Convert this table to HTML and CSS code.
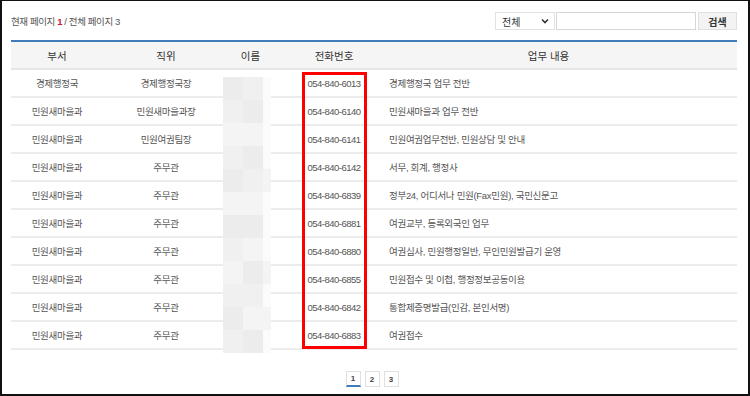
FILE: index.html
```html
<!DOCTYPE html>
<html lang="ko">
<head>
    <meta charset="UTF-8">
    <title>직원 안내</title>
    <link rel="stylesheet" href="styles.css">
</head>
<body>
    <div class="page">
        <div class="toolbar">
            <p class="page-info">현재 페이지 <strong>1</strong> / 전체 페이지 3</p>
            <form class="search">
                <div class="select-box">
                    <span>전체</span>
                    <svg width="8" height="6" viewBox="0 0 8 6"><path d="M1 1.5 L4 4.5 L7 1.5" fill="none" stroke="#333" stroke-width="1.6"/></svg>
                </div>
                <input type="text" class="search-input">
                <button type="button" class="btn">검색</button>
            </form>
        </div>

        <div class="table-wrap">
            <table class="staff">
                <colgroup>
                    <col class="c-dept">
                    <col class="c-pos">
                    <col class="c-name">
                    <col class="c-tel">
                    <col class="c-work">
                </colgroup>
                <thead>
                    <tr>
                        <th>부서</th>
                        <th>직위</th>
                        <th>이름</th>
                        <th class="tel">전화번호</th>
                        <th class="work">업무 내용</th>
                    </tr>
                </thead>
                <tbody>
                    <tr><td>경제행정국</td><td>경제행정국장</td><td></td><td class="tel">054-840-6013</td><td class="work">경제행정국 업무 전반</td></tr>
                    <tr><td>민원새마을과</td><td>민원새마을과장</td><td></td><td class="tel">054-840-6140</td><td class="work">민원새마을과 업무 전반</td></tr>
                    <tr><td>민원새마을과</td><td>민원여권팀장</td><td></td><td class="tel">054-840-6141</td><td class="work">민원여권업무전반, 민원상담 및 안내</td></tr>
                    <tr><td>민원새마을과</td><td>주무관</td><td></td><td class="tel">054-840-6142</td><td class="work">서무, 회계, 행정사</td></tr>
                    <tr><td>민원새마을과</td><td>주무관</td><td></td><td class="tel">054-840-6839</td><td class="work">정부24, 어디서나 민원(Fax민원), 국민신문고</td></tr>
                    <tr><td>민원새마을과</td><td>주무관</td><td></td><td class="tel">054-840-6881</td><td class="work">여권교부, 등록외국인 업무</td></tr>
                    <tr><td>민원새마을과</td><td>주무관</td><td></td><td class="tel">054-840-6880</td><td class="work">여권심사, 민원행정일반, 무인민원발급기 운영</td></tr>
                    <tr><td>민원새마을과</td><td>주무관</td><td></td><td class="tel">054-840-6855</td><td class="work">민원접수 및 이첩, 행정정보공동이용</td></tr>
                    <tr><td>민원새마을과</td><td>주무관</td><td></td><td class="tel">054-840-6842</td><td class="work">통합제증명발급(인감, 본인서명)</td></tr>
                    <tr><td>민원새마을과</td><td>주무관</td><td></td><td class="tel">054-840-6883</td><td class="work">여권접수</td></tr>
                </tbody>
            </table>

            <!-- 이름 가림 -->
            <div class="blur">
                <i class="b1"></i><i class="b2"></i><i class="b0"></i>
                <i class="b2"></i><i class="b1"></i><i class="b0"></i>
                <i class="b3"></i><i class="b3"></i><i class="b0"></i>
                <i class="b2"></i><i class="b1"></i><i class="b0"></i>
                <i class="b1"></i><i class="b2"></i><i class="b3"></i>
                <i class="b3"></i><i class="b3"></i><i class="b0"></i>
                <i class="b1"></i><i class="b1"></i><i class="b0"></i>
                <i class="b2"></i><i class="b3"></i><i class="b0"></i>
                <i class="b3"></i><i class="b1"></i><i class="b3"></i>
                <i class="b2"></i><i class="b2"></i><i class="b0"></i>
                <i class="b1"></i><i class="b3"></i><i class="b3"></i>
                <i class="b2"></i><i class="b1"></i><i class="b0"></i>
            </div>
            <div class="highlight"></div>
        </div>

        <div class="paging">
            <a href="#" class="on">1</a>
            <a href="#">2</a>
            <a href="#">3</a>
        </div>
    </div>
</body>
</html>
```

FILE: styles.css
```css
* {
    margin: 0;
    padding: 0;
    box-sizing: border-box;
}
html, body {
    height: 100%;
}
body {
    font-family: "Liberation Sans", "Noto Sans CJK KR", sans-serif;
    font-size: 10px;
    color: #555;
    background: #fff;
}
.page {
    height: 396px;
    border: 2px solid #111;
    border-top-width: 1px;
    padding: 11px 11px 0 9px;
}
.toolbar {
    display: flex;
    justify-content: space-between;
    align-items: center;
    height: 18px;
}
.page-info {
    font-size: 9.5px;
    color: #555;
    letter-spacing: -0.4px;
}
.page-info strong {
    color: #c8202a;
    font-weight: 700;
}
.search {
    display: flex;
    gap: 1px;
    height: 18px;
}
.select-box {
    width: 60px;
    display: flex;
    align-items: center;
    justify-content: space-between;
    padding: 0 5px 0 6px;
    border: 1px solid #e2e2e2;
    font-size: 10px;
    color: #333;
}
.search-input {
    width: 140px;
    border: 1px solid #d6d6d6;
    outline: none;
}
.btn {
    width: 39px;
    margin-left: 1px;
    border: 1px solid #e0e0e0;
    background: #f3f3f3;
    font-family: inherit;
    font-size: 10px;
    font-weight: 700;
    color: #333;
}
.table-wrap {
    position: relative;
    margin-top: 10px;
}
.staff {
    width: 726px;
    border-collapse: collapse;
    table-layout: fixed;
    border-top: 2px solid #3f7cb9;
}
.c-dept { width: 92px; }
.c-pos { width: 126px; }
.c-name { width: 43px; }
.c-tel { width: 108px; }
.c-work { width: auto; }
.staff th {
    height: 28px;
    background: #f5f5f5;
    font-weight: 400;
    font-size: 10.5px;
    color: #333;
    border-bottom: 2px solid #e6e6e6;
}
.staff td {
    height: 28px;
    text-align: center;
    font-size: 9.5px;
    color: #555;
    letter-spacing: -0.3px;
    border-bottom: 2px solid #ececec;
    white-space: nowrap;
}
.staff .tel {
    padding-left: 16px;
}
.staff td.tel {
    letter-spacing: -0.5px;
    font-size: 9.5px;
}
.staff th.work {
    padding-right: 20px;
}
.staff td.work {
    text-align: left;
    padding-left: 9px;
}
.blur {
    position: absolute;
    left: 212px;
    top: 37px;
    width: 48px;
    display: grid;
    grid-template-columns: 20px 20px 8px;
    grid-auto-rows: 23px;
}
.blur i { display: block; }
.blur .b0 { background: #fbfbfb; }
.blur .b1 { background: #ececec; }
.blur .b2 { background: #f0f0f0; }
.blur .b3 { background: #f4f4f4; }
.highlight {
    position: absolute;
    left: 291px;
    top: 32px;
    width: 65px;
    height: 277px;
    border: 3px solid #f00;
}
.paging {
    display: flex;
    justify-content: center;
    gap: 4px;
    margin-top: 21px;
    padding-right: 4px;
}
.paging a {
    width: 15px;
    height: 16px;
    display: flex;
    align-items: center;
    justify-content: center;
    border: 1px solid #e0e0e0;
    font-size: 8px;
    font-weight: 700;
    color: #444;
    text-decoration: none;
}
.paging a.on {
    border-bottom: 2px solid #3f7cb9;
}
```
